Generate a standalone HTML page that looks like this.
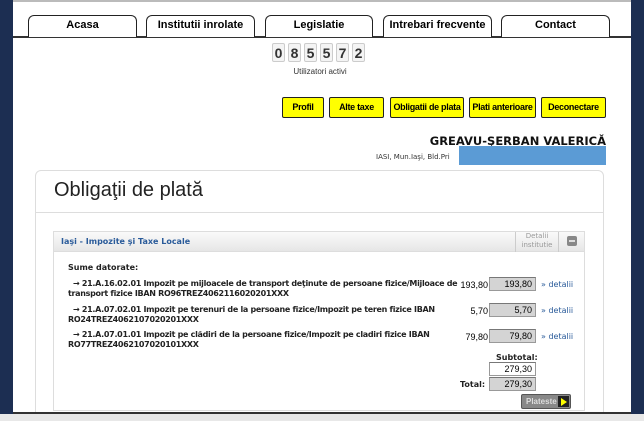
<!DOCTYPE html>
<html><head><meta charset="utf-8"><style>
*{margin:0;padding:0;box-sizing:border-box}
body{width:644px;height:421px;background:#fff;position:relative;overflow:hidden;font-family:"Liberation Sans",sans-serif}
.a{position:absolute}
.tab{position:absolute;top:15px;height:22px;border:1.5px solid #222;border-bottom:none;border-radius:6px 6px 0 0;background:#fff;font:bold 11px "Liberation Sans",sans-serif;text-align:center;line-height:19px}
.dg{position:absolute;top:43px;width:13px;height:19px;background:#f4f4f4;border:1px solid #ccc;border-radius:2px;font:bold 14px "Liberation Sans",sans-serif;text-align:center;line-height:18px;color:#333}
.yb{position:absolute;top:97px;height:21px;background:#ffff00;border:1.5px solid #222;border-radius:2px;font:bold 9px "Liberation Sans",sans-serif;text-align:center;line-height:18px;white-space:nowrap;letter-spacing:-0.3px}
.v{font:bold 8px "DejaVu Sans",sans-serif;color:#222;white-space:nowrap}
.in{position:absolute;width:47px;height:14px;background:#d4d4d4;border:1px solid #999;border-top-color:#777;font:9px "Liberation Sans",sans-serif;text-align:right;padding-right:3px;line-height:12px}
.am{position:absolute;width:38px;text-align:right;font:9px "Liberation Sans",sans-serif}
.de{position:absolute;font:8px "DejaVu Sans",sans-serif;color:#2a5b9a}
.r{line-height:10px;letter-spacing:-0.3px}
</style></head><body>
<div class="a" style="left:0;top:0;width:13px;height:421px;background:#1c2e52"></div>
<div class="a" style="left:631px;top:0;width:13px;height:421px;background:#1c2e52"></div>
<div class="a" style="left:13px;top:0;width:618px;height:2px;background:#bbb"></div>
<div class="a" style="left:13px;top:36px;width:618px;height:1.5px;background:#333"></div>
<div class="tab" style="left:28px;width:109px">Acasa</div>
<div class="tab" style="left:146px;width:109px">Institutii inrolate</div>
<div class="tab" style="left:265px;width:108px">Legislatie</div>
<div class="tab" style="left:383px;width:109px">Intrebari frecvente</div>
<div class="tab" style="left:501px;width:109px">Contact</div>
<div class="dg" style="left:272px">0</div><div class="dg" style="left:288px">8</div><div class="dg" style="left:304px">5</div><div class="dg" style="left:320px">5</div><div class="dg" style="left:336px">7</div><div class="dg" style="left:352px">2</div>
<div class="a" style="left:270px;top:67px;width:100px;text-align:center;font:8px 'Liberation Sans',sans-serif;color:#333">Utilizatori activi</div>
<div class="yb" style="left:282px;width:42px">Profil</div>
<div class="yb" style="left:329px;width:55px">Alte taxe</div>
<div class="yb" style="left:390px;width:74px">Obligatii de plata</div>
<div class="yb" style="left:469px;width:67px">Plati anterioare</div>
<div class="yb" style="left:541px;width:65px">Deconectare</div>
<div class="a" style="right:38px;top:134px;font:bold 11.5px 'DejaVu Sans',sans-serif;color:#111">GREAVU-ŞERBAN VALERICĂ</div>
<div class="a" style="left:376px;top:153px;font:7px 'DejaVu Sans',sans-serif;color:#333">IASI, Mun.Iaşi, Bld.Pri</div>
<div class="a" style="left:459px;top:146px;width:147px;height:19px;background:#5b9bd5"></div>
<div class="a" style="left:35px;top:170px;width:569px;height:250px;border:1px solid #ddd;border-radius:6px"></div>
<div class="a" style="left:35px;top:212px;width:569px;height:1px;background:#ddd"></div>
<div class="a" style="left:54px;top:179px;font:20px 'Liberation Sans',sans-serif;color:#222">Obligaţii de plată</div>
<div class="a" style="left:53px;top:231px;width:532px;height:180px;border:1px solid #ddd"></div>
<div class="a" style="left:54px;top:232px;width:530px;height:20px;background:linear-gradient(#fafafa,#e6e6e6);border-bottom:1px solid #ddd"></div>
<div class="a" style="left:61px;top:237px;font:bold 8px 'DejaVu Sans',sans-serif;color:#2a5b9a">Iaşi - Impozite şi Taxe Locale</div>
<div class="a" style="left:515px;top:232px;width:1px;height:20px;background:#ccc"></div>
<div class="a" style="left:558px;top:232px;width:1px;height:20px;background:#ccc"></div>
<div class="a" style="left:516px;top:232px;width:42px;text-align:center;font:7px/9px 'DejaVu Sans',sans-serif;color:#999">Detalii<br>institutie</div>
<div class="a" style="left:567px;top:236px;width:10px;height:10px;background:#888;border-radius:2px"><div style="margin:4px 2px;height:2px;background:#ddd"></div></div>
<div class="a v" style="left:68px;top:263px">Sume datorate:</div>
<div class="a v r" style="left:68px;top:279px">&nbsp;&nbsp;→ 21.A.16.02.01 Impozit pe mijloacele de transport deţinute de persoane fizice/Mijloace de<br>transport fizice IBAN RO96TREZ4062116020201XXX</div>
<div class="a v r" style="left:68px;top:305px">&nbsp;&nbsp;→ 21.A.07.02.01 Impozit pe terenuri de la persoane fizice/Impozit pe teren fizice IBAN<br>RO24TREZ4062107020201XXX</div>
<div class="a v r" style="left:68px;top:330px">&nbsp;&nbsp;→ 21.A.07.01.01 Impozit pe clădiri de la persoane fizice/Impozit pe cladiri fizice IBAN<br>RO77TREZ4062107020101XXX</div>
<div class="am" style="left:450px;top:280px">193,80</div><div class="in" style="left:489px;top:277px">193,80</div><div class="de" style="left:541px;top:280px">» detalii</div>
<div class="am" style="left:450px;top:306px">5,70</div><div class="in" style="left:489px;top:303px">5,70</div><div class="de" style="left:541px;top:306px">» detalii</div>
<div class="am" style="left:450px;top:332px">79,80</div><div class="in" style="left:489px;top:329px">79,80</div><div class="de" style="left:541px;top:332px">» detalii</div>
<div class="a v" style="left:496px;top:353px">Subtotal:</div>
<div class="in" style="left:489px;top:362px;background:#fff">279,30</div>
<div class="a v" style="left:460px;top:380px">Total:</div>
<div class="in" style="left:489px;top:377px">279,30</div>
<div class="a" style="left:521px;top:394px;width:50px;height:15px;background:#888;border:1px solid #555;border-radius:2px;font:bold 8px/13px 'Liberation Sans',sans-serif;color:#ddd;padding-left:4px">Plateste<span style="position:absolute;right:1px;top:1px;width:11px;height:11px;background:#222"><span style="position:absolute;left:3px;top:2px;border-left:6px solid #ff0;border-top:4px solid transparent;border-bottom:4px solid transparent"></span></span></div>
<div class="a" style="left:13px;top:412px;width:618px;height:2px;background:#333"></div>
<div class="a" style="left:0;top:414px;width:644px;height:7px;background:#e8e8e8"></div>
</body></html>
